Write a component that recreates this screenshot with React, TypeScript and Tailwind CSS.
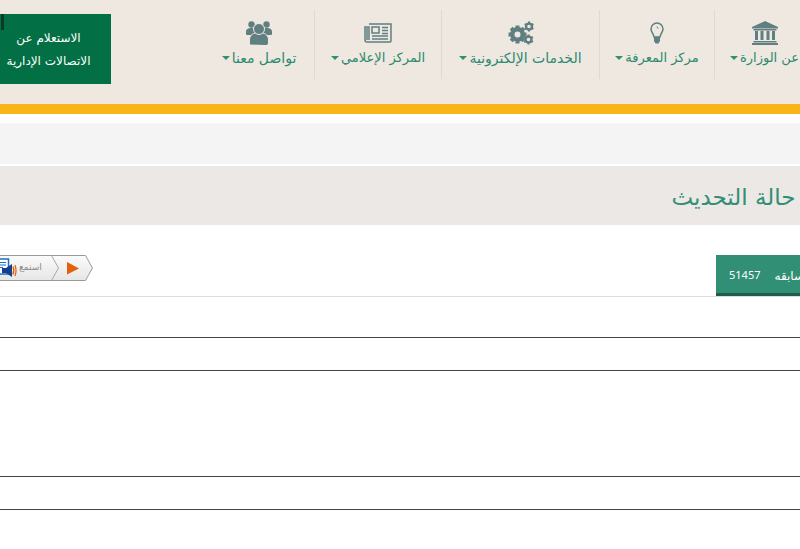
import React from "react";

const font = "font-['DejaVu_Sans',sans-serif]";

const PeopleIcon = () => (
  <svg width="26" height="24" viewBox="0 0 26 24" fill="#5f7f80">
    <circle cx="5.500" cy="3.500" r="3.200" />
    <circle cx="20.500" cy="3.500" r="3.200" />
    <path d="M0 14v-3c0-3 2-4 5.500-4S11 8 11 11v3H2c-1 0-2 0-2-1z" />
    <path d="M26 14v-3c0-3-2-4-5.500-4S15 8 15 11v3h9c1 0 2 0 2-1z" />
    <path
      d="M3.500 24v-5c0-5 4-7.500 9.500-7.500s9.500 2.500 9.500 7.500v3c0 1.500-1 2.500-3 2.500z"
      stroke="#efe8e0"
      strokeWidth="1"
    />
    <circle cx="13" cy="8" r="5.500" stroke="#efe8e0" strokeWidth="1" />
  </svg>
);

const PaperIcon = () => (
  <svg width="28" height="20" viewBox="0 0 28 20" fill="none" stroke="#5f7f80" strokeWidth="1.500">
    <path d="M5 1h22v17a1 1 0 0 1-1 1H3a2 2 0 0 1-2-2V4h4v13" />
    <path d="M3 5v12" />
    <rect x="8" y="4" width="7" height="6" />
    <path d="M18 4.500h6M18 7.500h6M18 10.500h6M8 13h16M8 16h16" />
  </svg>
);

const Gear = ({ cx, cy, r, hole, teeth }: { cx: number; cy: number; r: number; hole: number; teeth: number }) => (
  <g>
    <circle cx={cx} cy={cy} r={(r * 0.82 + hole) / 2} fill="none" stroke="#5f7f80" strokeWidth={r * 0.82 - hole} />
    {Array.from({ length: teeth }).map((_, i) => (
      <rect
        key={i}
        x={cx - r * 0.22}
        y={cy - r}
        width={r * 0.44}
        height={r * 0.45}
        fill="#5f7f80"
        transform={`rotate(${(360 / teeth) * i} ${cx} ${cy})`}
      />
    ))}
  </g>
);

const GearsIcon = () => (
  <svg width="26" height="24" viewBox="0 0 26 24">
    <Gear cx={9.500} cy={13.500} r={9} hole={3} teeth={8} />
    <Gear cx={21} cy={5.500} r={5} hole={1.800} teeth={6} />
    <Gear cx={20.500} cy={18.500} r={5} hole={1.800} teeth={6} />
  </svg>
);

const BulbIcon = () => (
  <svg width="14" height="22" viewBox="0 0 14 22" fill="none">
    <path
      d="M7 1a6 6 0 0 0-6 6c0 3 2.500 4.500 3 8h6c.5-3.500 3-5 3-8a6 6 0 0 0-6-6z"
      stroke="#5f7f80"
      strokeWidth="1.500"
    />
    <path d="M7 4.500l1 2" stroke="#5f7f80" />
    <path d="M4 15h6v4l-1.500 2.500h-3L4 19z" fill="#5f7f80" />
  </svg>
);

const BankIcon = () => (
  <svg width="26" height="24" viewBox="0 0 26 24" fill="#5f7f80">
    <path d="M13 0l13 6v1.500H0V6z" />
    <rect x="1.500" y="8" width="23" height="1.500" />
    <path d="M3 10h3v9H3zM8.500 10h3v9h-3zM14.500 10h3v9h-3zM20 10h3v9h-3z" />
    <rect x="1.500" y="20" width="23" height="1.500" />
    <rect x="0" y="22" width="26" height="2" />
  </svg>
);

const navItems = [
  { label: "تواصل معنا", icon: <PeopleIcon />, width: "w-[111px]", size: "text-[14px]" },
  { label: "المركز الإعلامي", icon: <PaperIcon />, width: "w-[127px]", size: "text-[13px]" },
  { label: "الخدمات الإلكترونية", icon: <GearsIcon />, width: "w-[158px]", size: "text-[14px]" },
  { label: "مركز المعرفة", icon: <BulbIcon />, width: "w-[115px]", size: "text-[13px]" },
  { label: "عن الوزارة", icon: <BankIcon />, width: "w-[99px]", size: "text-[13px]" },
];

const NavItem = ({ label, icon, width, size }: { label: string; icon: React.ReactNode; width: string; size: string }) => (
  <div className={`${width} shrink-0 h-[69px] flex flex-col items-center border-r border-[#d8dadb] last:border-r-0`}>
    <div className="h-[24px] mt-[11px] flex items-center justify-center">{icon}</div>
    <div dir="rtl" className={`flex items-center gap-[2px] mt-[3px] ${size} leading-[20px] text-[#2b8a70] whitespace-nowrap`}>
      <span>{label}</span>
      <span className="w-0 h-0 border-x-[4px] border-x-transparent border-t-[4px] border-t-[#318f75]" />
    </div>
  </div>
);

const ListenButton = () => (
  <div className="relative w-[93px] h-[27px] overflow-hidden">
    <svg className="absolute inset-0" width="93" height="27" viewBox="0 0 93 27">
      <defs>
        <linearGradient id="btn" x1="0" y1="0" x2="0" y2="1">
          <stop offset="0" stopColor="#fbfbfb" />
          <stop offset="1" stopColor="#e6e6e6" />
        </linearGradient>
      </defs>
      <path d="M-10 .5H85.500L92.500 13 85.500 25.500H-10z" fill="url(#btn)" stroke="#9a9a9a" />
      <path d="M51.500 .5L58.500 13 51.500 25.500" fill="none" stroke="#a8a8a8" />
      <path d="M67 7L79 13.500 67 19.500z" fill="#e3600c" />
      <rect x="-3" y="4" width="11.500" height="15" fill="#ffffff" stroke="#1c6fc0" strokeWidth="1.500" />
      <path d="M0 7.500h6M0 10h6M0 12.500h3" stroke="#1c6fc0" />
      <path d="M2 13h4l6-4v13l-6-4H2z" fill="#12408f" />
      <path d="M13 11.500c1 2 1 6 0 8" fill="none" stroke="#e3600c" strokeWidth="1.500" />
      <path d="M15 10c1.200 3.500 1.200 8 0 11" fill="none" stroke="#e3600c" strokeWidth="1.200" />
    </svg>
    <span dir="rtl" className="absolute left-[19px] top-[5px] text-[9px] leading-[14px] text-[#888]">استمع</span>
  </div>
);

export default function App() {
  return (
    <div className={`w-[800px] h-[549px] overflow-hidden bg-white ${font}`}>
      <header className="h-[104px] bg-[#efe8e0] flex items-start overflow-hidden">
        <div
          dir="rtl"
          className="relative w-[111px] h-[70px] mt-[14px] shrink-0 bg-[#026f45] text-white text-[12px] leading-[23px] text-center pt-[13px] pr-[14px]"
        >
          <span className="absolute left-[1px] top-0 w-[3px] h-[16px] bg-[#0b3a2a]" />
          <div>الاستعلام عن</div>
          <div className="whitespace-nowrap">الاتصالات الإدارية</div>
        </div>
        <nav className="flex mt-[10px] ml-[93px]">
          {navItems.map((item) => (
            <NavItem key={item.label} {...item} />
          ))}
        </nav>
      </header>
      <div className="h-[10px] bg-[#f9b517]" />
      <div className="h-[41px] mt-[9px] bg-[#f4f4f4]" />
      <div dir="rtl" className="h-[59px] mt-[2px] pt-[3px] bg-[#ebe8e6] flex items-center overflow-hidden">
        <h1 className="mr-[-33px] text-[23px] text-[#318f75] whitespace-nowrap">في حالة التحديث</h1>
      </div>
      <div className="h-[72px] pt-[30px] border-b border-[#dddddd] flex items-start justify-between">
        <ListenButton />
        <div className="w-[84px] h-[41px] pt-[3px] bg-[#318f75] border-b-[3px] border-[#1f5c4b] flex items-center text-white overflow-hidden">
          <span className="ml-[13px] mr-[14px] text-[11px] font-['Noto_Sans',sans-serif]">51457</span>
          <span dir="rtl" className="text-[12px] whitespace-nowrap">السابقه</span>
        </div>
      </div>
      <div className="h-[41px] border-b border-[#444]" />
      <div className="h-[33px] border-b border-[#444]" />
      <div className="h-[106px] border-b border-[#444]" />
      <div className="h-[33px] border-b border-[#444]" />
    </div>
  );
}
